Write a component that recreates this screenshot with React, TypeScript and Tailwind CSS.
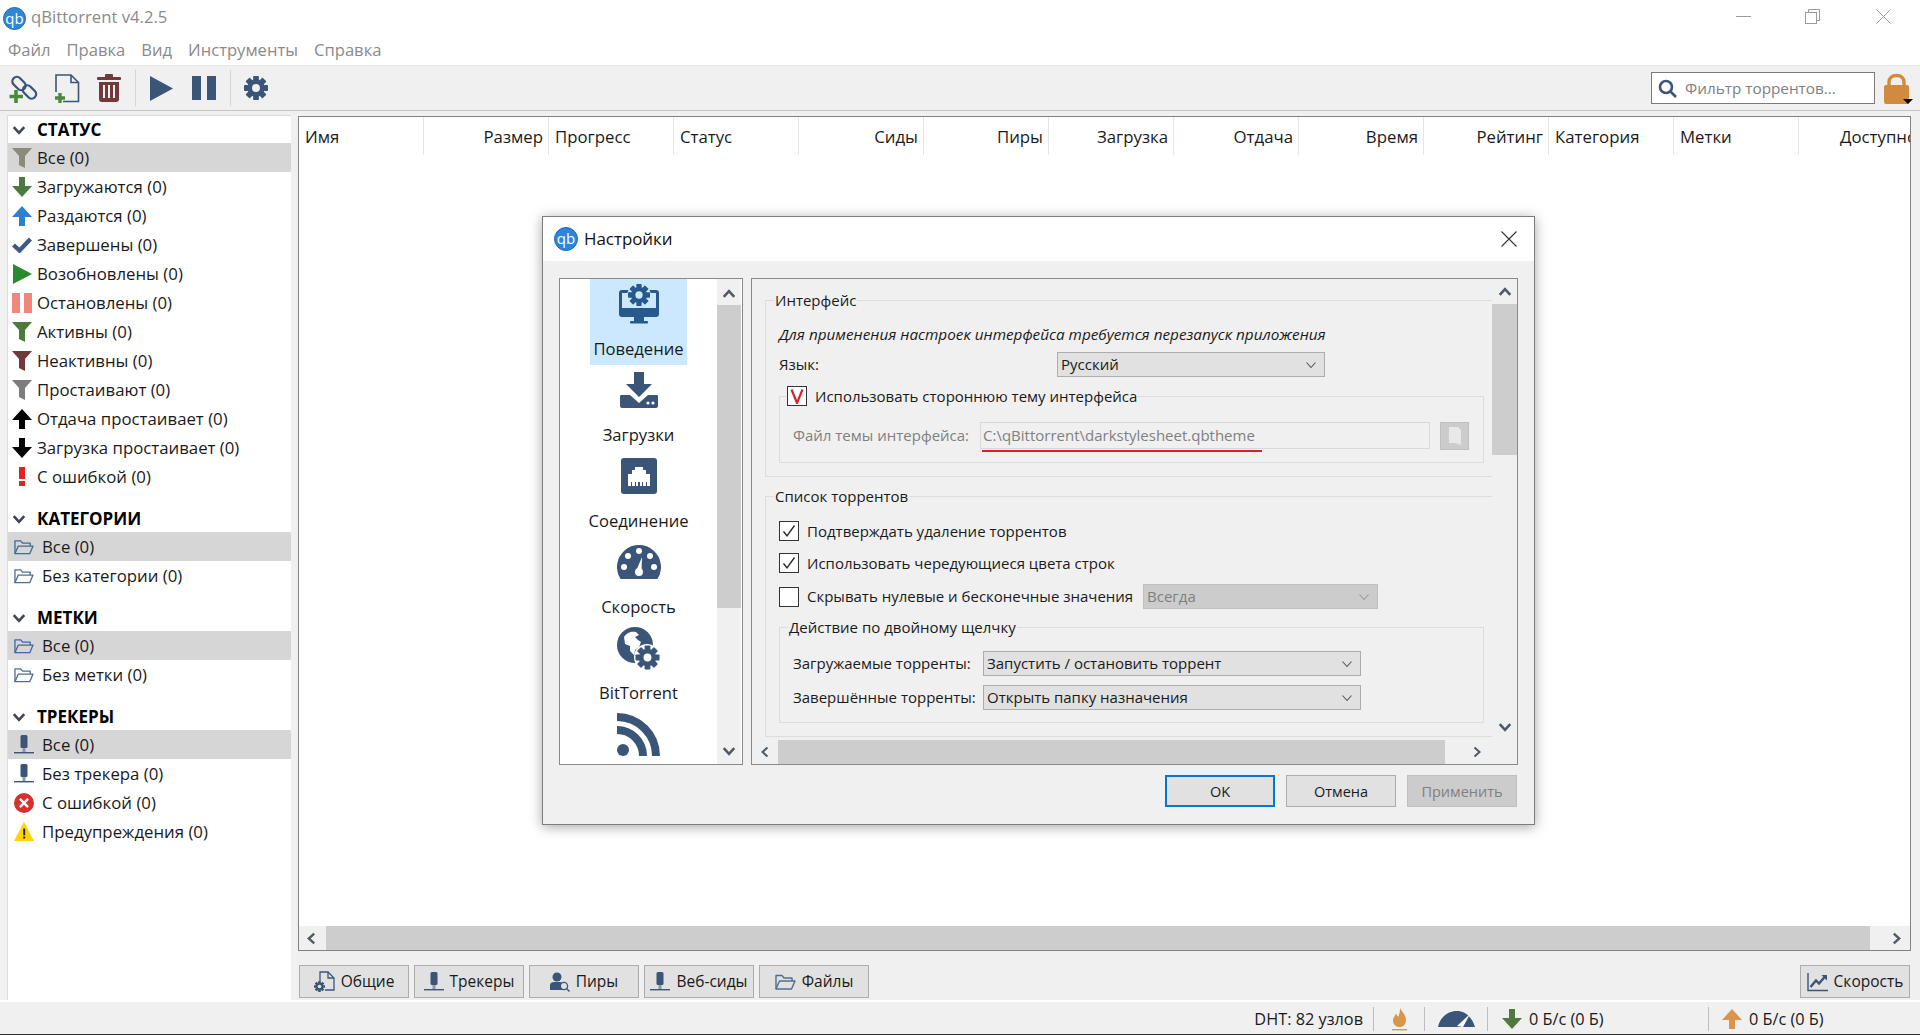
import React from 'react';

const navy = '#3a5578';

function Gear({ cx, cy, r, fill, hole }: { cx: number; cy: number; r: number; fill: string; hole: string }) {
  const teeth = [0, 45, 90, 135, 180, 225, 270, 315];
  return (
    <g>
      {teeth.map((a) => (
        <rect
          key={a}
          x={cx - r * 0.24}
          y={cy - r}
          width={r * 0.48}
          height={r * 0.5}
          rx={r * 0.06}
          fill={fill}
          stroke="none"
          transform={`rotate(${a} ${cx} ${cy})`}
        />
      ))}
      <circle cx={cx} cy={cy} r={r * 0.72} fill={fill} stroke="none" />
      <circle cx={cx} cy={cy} r={r * 0.33} fill={hole} stroke="none" />
    </g>
  );
}

function QbLogo({ big }: { big?: boolean }) {
  return (
    <div
      className={
        big
          ? 'w-[24px] h-[24px] rounded-full bg-[#2f86d6] border border-[#1e6ab5] text-white text-[15px] leading-[21px] text-center'
          : 'w-[23px] h-[23px] rounded-full bg-[#2f86d6] border border-[#1e6ab5] text-white text-[15px] leading-[20px] text-center'
      }
    >
      qb
    </div>
  );
}

function Funnel({ color }: { color: string }) {
  return (
    <svg width="20" height="20" viewBox="0 0 20 20">
      <path d="M0 0H20L13 8V20L7 17V8Z" fill={color} />
    </svg>
  );
}

function ArrowDown({ color }: { color: string }) {
  return (
    <svg width="20" height="20" viewBox="0 0 20 20">
      <path d="M7 0H13V9H20L10 20L0 9H7Z" fill={color} />
    </svg>
  );
}

function ArrowUp({ color }: { color: string }) {
  return (
    <svg width="20" height="20" viewBox="0 0 20 20">
      <path d="M7 20H13V11H20L10 0L0 11H7Z" fill={color} />
    </svg>
  );
}

function FolderOpen({ color = '#516e92' }: { color?: string }) {
  return (
    <svg width="21" height="16" viewBox="0 0 21 16" fill="none" stroke={color} strokeWidth="1.4" strokeLinejoin="round">
      <path d="M1 15V1.5H7L9 4H17V7" />
      <path d="M1 15L4.5 7H20L16.5 15Z" />
    </svg>
  );
}

function TrackerIcon() {
  return (
    <svg width="20" height="20" viewBox="0 0 20 20">
      <rect x="6.5" y="0" width="7" height="13" rx="1.5" fill={navy} />
      <rect x="8.5" y="13" width="3" height="4" fill="#8b98aa" />
      <rect x="0" y="17" width="20" height="1.4" fill={navy} />
    </svg>
  );
}

function Chevron({ dir, color = '#505a66', size = 12, sw = 2 }: { dir: 'up' | 'down' | 'left' | 'right'; color?: string; size?: number; sw?: number }) {
  const d = {
    up: 'M1.5 8.5L6 3.5L10.5 8.5',
    down: 'M1.5 3.5L6 8.5L10.5 3.5',
    left: 'M8.5 1.5L3.5 6L8.5 10.5',
    right: 'M3.5 1.5L8.5 6L3.5 10.5',
  }[dir];
  return (
    <svg width={size} height={size} viewBox="0 0 12 12" fill="none" stroke={color} strokeWidth={sw}>
      <path d={d} />
    </svg>
  );
}

function ToolbarSep() {
  return <div className="w-px h-[36px] bg-[#d4d4d4]" />;
}

function FilterRow({ icon, label, active, indent }: { icon: React.ReactNode; label: string; active?: boolean; indent?: boolean }) {
  return (
    <div className={active ? 'h-[29px] flex items-center bg-[#d6d6d6]' : 'h-[29px] flex items-center'}>
      <div className={indent ? 'w-[20px] ml-[6px] flex justify-center' : 'w-[20px] ml-[4px] flex justify-center'}>{icon}</div>
      <span className={indent ? 'ml-[8px] whitespace-nowrap' : 'ml-[5px] whitespace-nowrap'}>{label}</span>
    </div>
  );
}

function FilterHeader({ label, first }: { label: string; first?: boolean }) {
  return (
    <div className={first ? 'h-[27px] flex items-center' : 'h-[27px] mt-[14px] flex items-center'}>
      <div className="ml-[4px] w-[14px]">
        <Chevron dir="down" color="#3f4850" size={14} sw={2.2} />
      </div>
      <span className="ml-[11px] font-bold text-black text-[17px]">{label}</span>
    </div>
  );
}

function HeaderCell({ label, right }: { label: string; right?: boolean }) {
  return (
    <div
      className={
        right
          ? 'w-[125px] shrink-0 h-full border-r border-[#e5e5e5] pt-[2px] px-[5px] flex items-center justify-end whitespace-nowrap overflow-hidden'
          : 'w-[125px] shrink-0 h-full border-r border-[#e5e5e5] pt-[2px] px-[6px] flex items-center whitespace-nowrap overflow-hidden'
      }
    >
      {label}
    </div>
  );
}

function BottomTab({ icon, label }: { icon: React.ReactNode; label: string }) {
  return (
    <div className="w-[110px] h-[33px] bg-[#e1e1e1] border border-[#adadad] flex items-center justify-center gap-[6px]">
      {icon}
      <span>{label}</span>
    </div>
  );
}

function PrefItem({ icon, label, active }: { icon: React.ReactNode; label?: string; active?: boolean }) {
  return (
    <div className={active ? 'w-[97px] h-[86px] shrink-0 bg-[#cce8ff] flex flex-col items-center' : 'w-[97px] h-[86px] shrink-0 flex flex-col items-center'}>
      <div className="h-[50px] flex items-center justify-center">{icon}</div>
      {label && <div className="mt-[8px] h-[24px] leading-[24px] whitespace-nowrap text-[16.6px]">{label}</div>}
    </div>
  );
}

function Select({ label, w, disabled }: { label: string; w: string; disabled?: boolean }) {
  return (
    <div
      className={
        disabled
          ? `${w} h-[25px] bg-[#cccccc] border border-[#bfbfbf] text-[#808080] flex items-center justify-between pl-[3px] pr-[7px]`
          : `${w} h-[25px] bg-[#e1e1e1] border border-[#adadad] flex items-center justify-between pl-[3px] pr-[7px]`
      }
    >
      <span className="whitespace-nowrap">{label}</span>
      <Chevron dir="down" color={disabled ? '#9a9a9a' : '#555555'} size={12} sw={1.1} />
    </div>
  );
}

function Check({ on }: { on?: boolean }) {
  return (
    <div className="w-[20px] h-[20px] shrink-0 bg-white border border-[#333333] flex items-center justify-center">
      {on && (
        <svg width="14" height="14" viewBox="0 0 14 14" fill="none" stroke="#222222" strokeWidth="1.3">
          <path d="M1.5 7.5L5 12L12.5 1.5" />
        </svg>
      )}
    </div>
  );
}

export default function App() {
  return (
    <div className="relative w-[1920px] h-[1035px] overflow-hidden bg-[#f0f0f0] flex flex-col text-[15.5px] text-[#1a1a1a] font-['Open_Sans','Noto_Sans',sans-serif]">
      {/* title bar */}
      <div className="h-[36px] bg-white flex items-center shrink-0">
        <div className="ml-[3px]">
          <QbLogo />
        </div>
        <span className="ml-[5px] mb-[2px] text-[#8a8a8a] text-[16.7px]">qBittorrent v4.2.5</span>
        <div className="ml-auto flex items-center mr-[29px] mb-[3px]">
          <div className="w-[15px] h-px bg-[#9a9a9a]" />
          <svg className="ml-[54px]" width="15" height="15" viewBox="0 0 15 15" fill="none" stroke="#9a9a9a">
            <path d="M3.5 3.5V0.5H14.5V11.5H11.5" />
            <rect x="0.5" y="3.5" width="11" height="11" />
          </svg>
          <svg className="ml-[56px]" width="15" height="15" viewBox="0 0 15 15" fill="none" stroke="#9a9a9a">
            <path d="M0.5 0.5L14.5 14.5M14.5 0.5L0.5 14.5" />
          </svg>
        </div>
      </div>

      {/* menu */}
      <div className="h-[29px] bg-white flex items-center gap-[16px] pl-[8px] text-[#8a8a8a] text-[16.6px] shrink-0">
        <span>Файл</span>
        <span>Правка</span>
        <span>Вид</span>
        <span>Инструменты</span>
        <span>Справка</span>
      </div>
      <div className="h-px bg-[#e6e6e6] shrink-0" />

      {/* toolbar */}
      <div className="h-[45px] border-b border-[#c4c4c4] flex items-center shrink-0">
        <div className="ml-[9px] w-[29px]">
          <svg width="29" height="29" viewBox="0 0 29 29" fill="none" stroke={navy} strokeWidth="2.3">
            <rect x="2.5" y="5" width="15" height="9" rx="4.5" transform="rotate(45 10 9.5)" />
            <rect x="13" y="13.5" width="15" height="9" rx="4.5" transform="rotate(45 20.5 18)" />
            <path d="M7 16V29M0.5 22.5H14" stroke="#4a8a3a" strokeWidth="3.6" />
          </svg>
        </div>
        <div className="ml-[16px] w-[26px]">
          <svg width="26" height="29" viewBox="0 0 26 29" fill="none" stroke={navy} strokeWidth="1.6">
            <path d="M2 18V1H17L24.5 8.5V27.5H9" />
            <path d="M17 1V8.5H24.5" />
            <path d="M6 19V29M1 24H11" stroke="#4a8a3a" strokeWidth="3.4" />
          </svg>
        </div>
        <div className="ml-[17px] w-[24px] mr-[14px]">
          <svg width="24" height="28" viewBox="0 0 24 28" fill="#733838">
            <rect x="0" y="3" width="24" height="3" rx="1" />
            <rect x="8" y="0" width="8" height="4" rx="1" />
            <path d="M2 8H22V25C22 27 21 28 19 28H5C3 28 2 27 2 25ZM6 11V24H8V11ZM11 11V24H13V11ZM16 11V24H18V11Z" fillRule="evenodd" />
          </svg>
        </div>
        <ToolbarSep />
        <div className="ml-[14px] w-[23px]">
          <svg width="23" height="25" viewBox="0 0 23 25" fill={navy}>
            <path d="M0 0L23 12.5L0 25Z" />
          </svg>
        </div>
        <div className="ml-[19px] w-[24px] flex gap-[6px] mr-[14px]">
          <div className="w-[9px] h-[24px] bg-[#3a5578]" />
          <div className="w-[9px] h-[24px] bg-[#3a5578]" />
        </div>
        <ToolbarSep />
        <div className="ml-[13px]">
          <svg width="24" height="24" viewBox="0 0 24 24">
            <Gear cx={12} cy={12} r={12} fill={navy} hole="#f0f0f0" />
          </svg>
        </div>
        <div className="ml-auto w-[224px] h-[32px] bg-white border border-[#7a7a7a] flex items-center pl-[6px]">
          <svg width="19" height="19" viewBox="0 0 19 19" fill="none" stroke={navy} strokeWidth="2.6">
            <circle cx="8" cy="8" r="6" />
            <path d="M12.5 12.5L18 18" />
          </svg>
          <span className="ml-[8px] text-[#808080] text-[15.3px]">Фильтр торрентов...</span>
        </div>
        <div className="relative ml-[8px] mr-[10px] w-[27px]">
          <svg width="27" height="31" viewBox="0 0 27 31">
            <path d="M6 14V9C6 5 9 2.5 13.5 2.5C18 2.5 21 5 21 9V14" fill="none" stroke="#d08b3e" strokeWidth="3.4" />
            <rect x="1" y="12" width="25" height="19" rx="2" fill="#d08b3e" />
          </svg>
          <div className="absolute right-[-3px] bottom-[0px] w-0 h-0 border-l-[5px] border-r-[5px] border-t-[5px] border-l-transparent border-r-transparent border-t-black" />
        </div>
      </div>

      {/* body */}
      <div className="flex-1 flex pt-[4px] min-h-0">
        <div className="ml-[7px] w-[284px] bg-white border-l border-t border-[#dcdcdc] overflow-hidden text-[16.8px]">
          <FilterHeader first label="СТАТУС" />
          <FilterRow active label="Все (0)" icon={<Funnel color="#8c8a78" />} />
          <FilterRow label="Загружаются (0)" icon={<ArrowDown color="#4f7a3e" />} />
          <FilterRow label="Раздаются (0)" icon={<ArrowUp color="#2f7fd0" />} />
          <FilterRow
            label="Завершены (0)"
            icon={
              <svg width="20" height="16" viewBox="0 0 20 16" fill="none" stroke="#3f5a80" strokeWidth="4.4">
                <path d="M1.5 8L7.5 13.5L18.5 2" />
              </svg>
            }
          />
          <FilterRow
            label="Возобновлены (0)"
            icon={
              <svg width="19" height="20" viewBox="0 0 19 20" fill="#2b8a2b">
                <path d="M0 0L19 10L0 20Z" />
              </svg>
            }
          />
          <FilterRow
            label="Остановлены (0)"
            icon={
              <div className="flex gap-[4px]">
                <div className="w-[8px] h-[20px] bg-[#f2857c]" />
                <div className="w-[8px] h-[20px] bg-[#f2857c]" />
              </div>
            }
          />
          <FilterRow label="Активны (0)" icon={<Funnel color="#4f7a3e" />} />
          <FilterRow label="Неактивны (0)" icon={<Funnel color="#6f3a3a" />} />
          <FilterRow label="Простаивают (0)" icon={<Funnel color="#7d7d7d" />} />
          <FilterRow label="Отдача простаивает (0)" icon={<ArrowUp color="#000000" />} />
          <FilterRow label="Загрузка простаивает (0)" icon={<ArrowDown color="#000000" />} />
          <FilterRow
            label="С ошибкой (0)"
            icon={
              <div className="flex flex-col items-center gap-[2px]">
                <div className="w-[6px] h-[12px] bg-[#e02424]" />
                <div className="w-[6px] h-[5px] bg-[#e02424]" />
              </div>
            }
          />

          <FilterHeader label="КАТЕГОРИИ" />
          <FilterRow indent active label="Все (0)" icon={<FolderOpen color="#3f6a9c" />} />
          <FilterRow indent label="Без категории (0)" icon={<FolderOpen />} />

          <FilterHeader label="МЕТКИ" />
          <FilterRow indent active label="Все (0)" icon={<FolderOpen color="#3f6a9c" />} />
          <FilterRow indent label="Без метки (0)" icon={<FolderOpen />} />

          <FilterHeader label="ТРЕКЕРЫ" />
          <FilterRow indent active label="Все (0)" icon={<TrackerIcon />} />
          <FilterRow indent label="Без трекера (0)" icon={<TrackerIcon />} />
          <FilterRow
            indent
            label="С ошибкой (0)"
            icon={
              <svg width="22" height="22" viewBox="0 0 22 22">
                <circle cx="11" cy="11" r="11" fill="#d9302c" />
                <path d="M6.5 6.5L15.5 15.5M15.5 6.5L6.5 15.5" stroke="#ffffff" strokeWidth="2.6" />
              </svg>
            }
          />
          <FilterRow
            indent
            label="Предупреждения (0)"
            icon={
              <svg width="24" height="23" viewBox="0 0 24 23">
                <path d="M12 0L24 23H0Z" fill="#ffd400" />
                <rect x="11" y="8" width="2.4" height="8" fill="#222222" />
                <rect x="11" y="17.5" width="2.4" height="2.5" fill="#222222" />
              </svg>
            }
          />
        </div>

        {/* torrents table and tabs */}
        <div className="ml-[7px] w-[1613px] pt-[1px] flex flex-col">
          <div className="h-[835px] bg-white border border-[#828282] flex flex-col overflow-hidden">
            <div className="h-[38px] flex shrink-0 text-[16.8px]">
              <HeaderCell label="Имя" />
              <HeaderCell right label="Размер" />
              <HeaderCell label="Прогресс" />
              <HeaderCell label="Статус" />
              <HeaderCell right label="Сиды" />
              <HeaderCell right label="Пиры" />
              <HeaderCell right label="Загрузка" />
              <HeaderCell right label="Отдача" />
              <HeaderCell right label="Время" />
              <HeaderCell right label="Рейтинг" />
              <HeaderCell label="Категория" />
              <HeaderCell label="Метки" />
              <div className="w-[125px] shrink-0 h-full pt-[2px] flex items-center justify-start pl-[41px] whitespace-nowrap">Доступно</div>
            </div>
            <div className="flex-1" />
            <div className="h-[24px] flex bg-[#f0f0f0] shrink-0">
              <div className="w-[27px] flex items-center justify-center pr-[2px]">
                <Chevron dir="left" size={13} sw={2.2} />
              </div>
              <div className="flex-1 bg-[#cdcdcd]" />
              <div className="w-[40px] flex items-center pl-[20px]">
                <Chevron dir="right" size={13} sw={2.2} />
              </div>
            </div>
          </div>
          <div className="mt-[14px] flex gap-[5px] pl-[1px]">
            <BottomTab
              label="Общие"
              icon={
                <svg width="21" height="21" viewBox="0 0 21 21" fill="none" stroke={navy} strokeWidth="1.3">
                  <path d="M6 10V1H14L20 7V19H11" />
                  <path d="M14 1V7H20" />
                  <Gear cx={5.5} cy={15.5} r={5.5} fill={navy} hole="#e1e1e1" />
                </svg>
              }
            />
            <BottomTab label="Трекеры" icon={<TrackerIcon />} />
            <BottomTab
              label="Пиры"
              icon={
                <svg width="20" height="20" viewBox="0 0 20 20">
                  <circle cx="7" cy="5" r="4.5" fill={navy} />
                  <path d="M0 18V13C0 11 2 10 4 10H10C11.5 10 13 11 13 12V18Z" fill={navy} />
                  <circle cx="14" cy="14" r="3.6" fill="#e1e1e1" stroke={navy} strokeWidth="1.3" />
                  <path d="M16.5 16.5L19.5 19.5" stroke={navy} strokeWidth="1.4" />
                </svg>
              }
            />
            <BottomTab label="Веб-сиды" icon={<TrackerIcon />} />
            <BottomTab label="Файлы" icon={<FolderOpen />} />
            <div className="ml-auto mr-[1px]">
              <div className="w-[110px] h-[33px] bg-[#e1e1e1] border border-[#adadad] flex items-center justify-center gap-[6px]">
                <svg width="21" height="20" viewBox="0 0 21 20" fill="none" stroke={navy} strokeWidth="1.4">
                  <path d="M1 1V18.5H21" />
                  <path d="M3.5 15L9 8.5L12 11.5L18.5 4" strokeWidth="2.4" />
                  <path d="M14.5 3H20V8.5Z" fill={navy} stroke="none" />
                </svg>
                <span>Скорость</span>
              </div>
            </div>
          </div>
        </div>
      </div>

      {/* status bar */}
      <div className="h-[35px] pt-[2px] border-t-2 border-white border-b border-b-[#333333] flex items-center justify-end shrink-0 text-[16.3px]">
        <div className="pr-[10px] whitespace-nowrap">DHT: 82 узлов</div>
        <div className="w-[51px] h-[24px] border-l border-[#bdbdbd] flex items-center justify-center">
          <svg width="15" height="24" viewBox="0 0 15 24">
            <path d="M8 1C10 5 14 8 14 13C14 17.5 11 20 7.5 20C4 20 1 17.5 1 13.5C1 10.5 3 9 4 6.5C5 9 6 9.5 6.5 9.5C7.5 7 8 4 8 1Z" fill="#d9964a" />
            <rect x="0" y="22" width="15" height="1.4" fill="#d9964a" />
          </svg>
        </div>
        <div className="w-[63px] h-[24px] border-l border-[#bdbdbd] flex items-center pl-[13px]">
          <svg width="37" height="16" viewBox="0 0 37 16">
            <path d="M0 16C2 6 10 0 19 0C27 0 34 6 37 16Z" fill={navy} />
            <path d="M19 15L32 3L25 16Z" fill="#ffffff" />
          </svg>
        </div>
        <div className="w-[221px] h-[24px] border-l border-[#bdbdbd] flex items-center pl-[14px] gap-[7px]">
          <ArrowDown color="#4f7a3e" />
          <span>0 Б/с (0 Б)</span>
        </div>
        <div className="w-[212px] h-[24px] border-l border-[#bdbdbd] flex items-center pl-[13px] gap-[7px]">
          <ArrowUp color="#d9964a" />
          <span>0 Б/с (0 Б)</span>
        </div>
      </div>

      {/* settings dialog */}
      <div className="absolute left-[542px] top-[216px] w-[993px] h-[609px] bg-[#f0f0f0] border border-[#7d7d7d] shadow-[0_2px_12px_rgba(0,0,0,0.35)] flex flex-col text-[15px]">
        <div className="h-[44px] bg-white flex items-center shrink-0">
          <div className="ml-[11px]">
            <QbLogo big />
          </div>
          <span className="ml-[6px] text-[#111111] text-[16.9px]">Настройки</span>
          <svg className="ml-auto mr-[17px]" width="16" height="16" viewBox="0 0 16 16" fill="none" stroke="#333333" strokeWidth="1.1">
            <path d="M0.5 0.5L15.5 15.5M15.5 0.5L0.5 15.5" />
          </svg>
        </div>

        <div className="flex pl-[16px] pt-[17px] gap-[8px]">
          {/* pages list */}
          <div className="w-[184px] h-[487px] bg-white border border-[#8a8a8a] flex overflow-hidden shrink-0">
            <div className="w-[157px] flex flex-col items-center overflow-hidden shrink-0">
              <PrefItem
                active
                label="Поведение"
                icon={
                  <svg width="40" height="40" viewBox="0 0 40 40">
                    <rect x="0" y="6" width="40" height="27" rx="3" fill="#27598c" />
                    <rect x="3" y="9" width="34" height="15" fill="#cce8ff" />
                    <circle cx="20" cy="12" r="12" fill="#cce8ff" />
                    <Gear cx={20} cy={11} r={11} fill="#27598c" hole="#cce8ff" />
                    <rect x="15" y="33" width="10" height="4" fill="#27598c" />
                    <rect x="11" y="37" width="18" height="2.5" rx="1" fill="#27598c" />
                  </svg>
                }
              />
              <PrefItem
                label="Загрузки"
                icon={
                  <svg width="38" height="36" viewBox="0 0 38 36">
                    <path d="M14 0H24V12H32L19 25L6 12H14Z" fill={navy} />
                    <path d="M0 24C0 23 1 23 2 23H10L19 31L28 23H36C37 23 38 23 38 24V34C38 35 37 36 36 36H2C1 36 0 35 0 34Z" fill={navy} />
                    <circle cx="28" cy="31" r="1.6" fill="#ffffff" />
                    <circle cx="33" cy="31" r="1.6" fill="#ffffff" />
                  </svg>
                }
              />
              <PrefItem
                label="Соединение"
                icon={
                  <svg width="36" height="36" viewBox="0 0 36 36">
                    <rect width="36" height="36" rx="3" fill={navy} />
                    <path d="M7 28V16H11V12H14V9H22V12H25V16H29V28H26V24H25V28H22V24H21V28H19V24H17V28H15V24H14V28H11V24H10V28Z" fill="#ffffff" />
                  </svg>
                }
              />
              <PrefItem
                label="Скорость"
                icon={
                  <svg width="44" height="34" viewBox="0 0 44 34">
                    <path d="M3.5 34A22 22 0 1 1 40.5 34Z" fill={navy} />
                    <circle cx="22" cy="6" r="3" fill="#ffffff" />
                    <circle cx="11" cy="11" r="3" fill="#ffffff" />
                    <circle cx="33" cy="11" r="3" fill="#ffffff" />
                    <circle cx="7" cy="22" r="3" fill="#ffffff" />
                    <circle cx="37" cy="22" r="3" fill="#ffffff" />
                    <path d="M19.5 25L25 12L24.5 26Z" fill="#ffffff" />
                    <circle cx="22" cy="27" r="4" fill="#ffffff" />
                  </svg>
                }
              />
              <PrefItem
                label="BitTorrent"
                icon={
                  <svg width="43" height="43" viewBox="0 0 43 43">
                    <circle cx="18" cy="18" r="18" fill={navy} />
                    <path d="M7 10C10 5 15 4 19 5L22 8L18 10L21 13L24 15L22 20L18 23L17 28L13 24L13 19L8 17Z" fill="#ffffff" />
                    <circle cx="30" cy="30" r="13" fill="#ffffff" />
                    <Gear cx={30.5} cy={30.5} r={12} fill={navy} hole="#ffffff" />
                  </svg>
                }
              />
              <PrefItem
                icon={
                  <svg width="43" height="43" viewBox="0 0 43 43" fill="none" stroke={navy} strokeWidth="8">
                    <path d="M0 4A39 39 0 0 1 39 43" />
                    <path d="M0 17A26 26 0 0 1 26 43" />
                    <circle cx="6" cy="37" r="6" fill={navy} stroke="none" />
                  </svg>
                }
              />
            </div>
            <div className="w-[24px] bg-[#f0f0f0] flex flex-col shrink-0">
              <div className="h-[26px] pt-[3px] flex items-center justify-center">
                <Chevron dir="up" size={14} sw={2.2} />
              </div>
              <div className="h-[303px] bg-[#cdcdcd]" />
              <div className="flex-1 flex items-end justify-center pb-[6px]">
                <Chevron dir="down" size={14} sw={2.2} />
              </div>
            </div>
          </div>

          {/* settings page */}
          <div className="w-[767px] h-[487px] border border-[#8a8a8a] flex flex-col overflow-hidden">
            <div className="flex h-[461px] shrink-0">
              <div className="w-[740px] pl-[13px] overflow-hidden">
                <fieldset className="mt-[10px] h-[188px] border border-r-0 border-[#dcdcdc] pl-[13px]">
                  <legend className="ml-[-5px] h-[22px] leading-[22px] px-[1px]">Интерфейс</legend>
                  <p className="mt-[11px] h-[24px] leading-[24px] italic whitespace-nowrap text-[15.3px]">Для применения настроек интерфейса требуется перезапуск приложения</p>
                  <div className="mt-[6px] h-[25px] flex items-center">
                    <span className="w-[278px]">Язык:</span>
                    <Select w="w-[268px]" label="Русский" />
                  </div>
                  <fieldset className="mt-[9px] w-[705px] h-[77px] border border-[#dcdcdc] pl-[13px]">
                    <legend className="ml-[-6px] h-[20px] flex items-center gap-[8px]">
                      <div className="w-[20px] h-[20px] bg-white border border-[#333333] flex items-center justify-center">
                        <svg width="14" height="15" viewBox="0 0 14 15" fill="none" stroke="#d9232a" strokeWidth="2.2">
                          <path d="M1.5 0.5L7 14L12.5 0.5" />
                        </svg>
                      </div>
                      <span className="whitespace-nowrap">Использовать стороннюю тему интерфейса</span>
                    </legend>
                    <div className="mt-[16px] h-[27px] flex items-center text-[#808080]">
                      <span className="w-[187px] whitespace-nowrap">Файл темы интерфейса:</span>
                      <div className="relative w-[450px] h-[27px] border border-[#d9d9d9] flex items-center pl-[2px]">
                        <span>C:\qBittorrent\darkstylesheet.qbtheme</span>
                        <div className="absolute left-[1px] bottom-[-4px] w-[280px] h-[2px] bg-[#d8232a]" />
                      </div>
                      <div className="ml-[10px] w-[29px] h-[28px] bg-[#cccccc] border border-[#bfbfbf] flex items-center justify-center">
                        <svg width="14" height="20" viewBox="0 0 14 20" fill="#e8e8e8">
                          <path d="M1 1H10L13 4V19L7 17H1Z" />
                        </svg>
                      </div>
                    </div>
                  </fieldset>
                </fieldset>

                <fieldset className="mt-[8px] h-[252px] border border-r-0 border-[#dcdcdc] pl-[13px]">
                  <legend className="ml-[-5px] h-[22px] leading-[22px] px-[1px]">Список торрентов</legend>
                  <div className="mt-[14px] h-[20px] flex items-center gap-[8px]">
                    <Check on />
                    <span className="whitespace-nowrap">Подтверждать удаление торрентов</span>
                  </div>
                  <div className="mt-[12px] h-[20px] flex items-center gap-[8px]">
                    <Check on />
                    <span className="whitespace-nowrap">Использовать чередующиеся цвета строк</span>
                  </div>
                  <div className="mt-[11px] h-[25px] flex items-center">
                    <Check />
                    <span className="ml-[8px] w-[336px] whitespace-nowrap">Скрывать нулевые и бесконечные значения</span>
                    <Select disabled w="w-[235px]" label="Всегда" />
                  </div>
                  <fieldset className="mt-[7px] w-[705px] h-[107px] border border-[#dcdcdc] pl-[13px]">
                    <legend className="ml-[-5px] h-[22px] leading-[22px] px-[1px]">Действие по двойному щелчку</legend>
                    <div className="mt-[13px] h-[25px] flex items-center">
                      <span className="w-[190px] whitespace-nowrap">Загружаемые торренты:</span>
                      <Select w="w-[378px]" label="Запустить / остановить торрент" />
                    </div>
                    <div className="mt-[9px] h-[25px] flex items-center">
                      <span className="w-[190px] whitespace-nowrap">Завершённые торренты:</span>
                      <Select w="w-[378px]" label="Открыть папку назначения" />
                    </div>
                  </fieldset>
                </fieldset>
              </div>
              <div className="w-[25px] flex flex-col shrink-0">
                <div className="h-[25px] pt-[1px] flex items-center justify-center">
                  <Chevron dir="up" size={14} sw={2.2} />
                </div>
                <div className="h-[151px] bg-[#cdcdcd]" />
                <div className="flex-1 flex items-end justify-center pb-[6px]">
                  <Chevron dir="down" size={14} sw={2.2} />
                </div>
              </div>
            </div>
            <div className="flex-1 flex">
              <div className="w-[26px] flex items-center justify-center">
                <Chevron dir="left" />
              </div>
              <div className="w-[667px] bg-[#cdcdcd]" />
              <div className="flex-1 flex items-center pl-[26px]">
                <Chevron dir="right" />
              </div>
            </div>
          </div>
        </div>

        <div className="mt-[10px] flex justify-end pr-[17px] gap-[11px] text-[14.5px]">
          <div className="w-[110px] h-[32px] bg-[#e1e1e1] border-2 border-[#0078d7] flex items-center justify-center pt-[1px]">OK</div>
          <div className="w-[110px] h-[32px] bg-[#e1e1e1] border border-[#adadad] flex items-center justify-center pt-[1px]">Отмена</div>
          <div className="w-[110px] h-[32px] bg-[#cccccc] border border-[#bfbfbf] text-[#808080] flex items-center justify-center pt-[1px]">Применить</div>
        </div>
      </div>
    </div>
  );
}
